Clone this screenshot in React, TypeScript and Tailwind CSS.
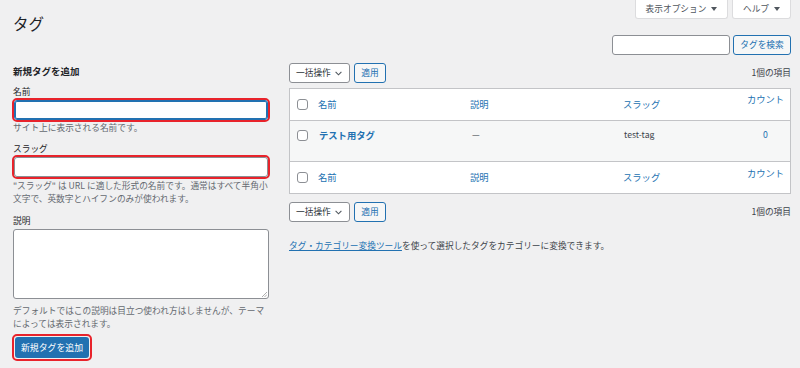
import React from "react";

function Caret() {
  return (
    <svg width="6" height="4" viewBox="0 0 6 4" className="ml-[5px] inline-block">
      <path d="M0 0 L6 0 L3 4 Z" fill="#50575e" />
    </svg>
  );
}

function Chevron() {
  return (
    <svg width="7" height="5" viewBox="0 0 7 5" className="ml-[4px]">
      <path d="M0.6 0.8 L3.5 3.8 L6.4 0.8" fill="none" stroke="#50575e" strokeWidth="1.1" />
    </svg>
  );
}

function Checkbox() {
  return <span className="block w-[11px] h-[11px] bg-white border border-[#8c8f94] rounded-[3px]" />;
}

function BulkNav() {
  return (
    <div className="flex items-center h-[20px]">
      <div className="flex items-center h-[20px] w-[61px] pl-[6px] bg-white border border-[#8c8f94] rounded-[3px] text-[8.7px] text-[#2c3338]">
        一括操作
        <Chevron />
      </div>
      <button className="ml-[4px] h-[20px] w-[32px] bg-[#f6f7f7] border border-[#2271b1] rounded-[3px] text-[8.7px] text-[#2271b1]">
        適用
      </button>
      <span className="ml-auto text-[8.7px] text-[#3c434a]">1個の項目</span>
    </div>
  );
}

function HeadRow({ footer }: { footer?: boolean }) {
  return (
    <div
      className={`grid grid-cols-[20px_152px_153px_126px_49px] h-[32px] items-center bg-white text-[9.3px] text-[#2271b1] ${
        footer ? "border-t border-[#c3c4c7]" : "border-b border-[#c3c4c7]"
      }`}
    >
      <div className="pl-[7px]">
        <Checkbox />
      </div>
      <div className="pl-[8px]">名前</div>
      <div className="pl-[8px]">説明</div>
      <div className="pl-[8px]">スラッグ</div>
      <div className={`text-center ${footer ? "-mt-[8px]" : "-mt-[10px]"}`}>カウント</div>
    </div>
  );
}

export default function App() {
  return (
    <div className="w-[800px] h-[368px] overflow-hidden bg-[#f0f0f1] text-[#3c434a] font-['Noto_Sans_CJK_JP',sans-serif]">
      <div className="flex justify-between pl-[13px] pr-[9px]">
        <h1 className="pt-[13px] text-[15.5px] leading-[20px] text-[#1d2327]">タグ</h1>
        <div className="flex gap-[4px] items-start">
          <button className="flex items-center justify-center h-[19px] w-[93px] bg-white border border-t-0 border-[#dcdcde] rounded-b-[3px] text-[8.7px] text-[#50575e]">
            表示オプション
            <Caret />
          </button>
          <button className="flex items-center justify-center h-[19px] w-[59px] bg-white border border-t-0 border-[#dcdcde] rounded-b-[3px] text-[8.7px] text-[#50575e]">
            ヘルプ
            <Caret />
          </button>
        </div>
      </div>

      <div className="flex justify-end pr-[9px] mt-[2px] gap-[3px]">
        <div className="h-[20px] w-[118px] bg-white border border-[#8c8f94] rounded-[3px]" />
        <button className="h-[20px] w-[58px] bg-[#f6f7f7] border border-[#2271b1] rounded-[3px] text-[8.7px] text-[#2271b1]">
          タグを検索
        </button>
      </div>

      <div className="flex pl-[13px] pr-[9px] mt-[8px]">
        <div className="w-[256px] shrink-0">
          <h2 className="mt-[2px] text-[9.5px] leading-[12px] font-bold text-[#1d2327]">新規タグを追加</h2>
          <label className="block mt-[9px] text-[8.7px] leading-[12px] text-[#1d2327]">名前</label>
          <div className="-ml-px w-[258px] h-[24px] border-2 border-[#e8232b] rounded-[5px]">
            <div className="h-full bg-white border border-[#2271b1] shadow-[inset_0_0_0_1px_#2271b1] rounded-[3px]" />
          </div>
          <p className="text-[8.7px] leading-[12px] text-[#646970]">サイト上に表示される名前です。</p>
          <label className="block mt-[9px] text-[8.7px] leading-[12px] text-[#1d2327]">スラッグ</label>
          <div className="-ml-px w-[258px] h-[24px] border-2 border-[#e8232b] rounded-[5px]">
            <div className="h-full bg-white border border-[#8c8f94] rounded-[3px]" />
          </div>
          <p className="text-[8.7px] leading-[13px] text-[#646970]">
            "スラッグ" は URL に適した形式の名前です。通常はすべて半角小文字で、英数字とハイフンのみが使われます。
          </p>
          <label className="block mt-[10px] text-[8.7px] leading-[12px] text-[#1d2327]">説明</label>
          <div className="relative mt-[2px] h-[70px] bg-white border border-[#8c8f94] rounded-[3px]">
            <svg width="6" height="6" viewBox="0 0 6 6" className="absolute right-[1px] bottom-[1px]">
              <path d="M1 6 L6 1 M3.5 6 L6 3.5" stroke="#9a9a9a" strokeWidth="0.8" />
            </svg>
          </div>
          <p className="mt-[5px] text-[8.7px] leading-[13px] text-[#646970]">
            デフォルトではこの説明は目立つ使われ方はしませんが、テーマによっては表示されます。
          </p>
          <div className="-ml-px mt-[4px] w-[80px] h-[27px] border-2 border-[#e8232b] rounded-[5px] p-px">
            <button className="block w-full h-full bg-[#2271b1] rounded-[3px] text-[8.9px] leading-[12px] text-white">
              新規タグを追加
            </button>
          </div>
        </div>

        <div className="ml-[20px] flex-1">
          <BulkNav />
          <div className="mt-[5px] border border-[#c3c4c7]">
            <HeadRow />
            <div className="grid grid-cols-[20px_152px_153px_126px_49px] h-[40px] bg-[#f6f7f7] pt-[8px] text-[8.7px] leading-[12px]">
              <div className="pl-[7px] pt-[1px]">
                <Checkbox />
              </div>
              <div className="pl-[9px] text-[9.3px] font-bold text-[#2271b1]">テスト用タグ</div>
              <div className="pl-[10px]">—</div>
              <div className="pl-[9px]">test-tag</div>
              <div className="text-center text-[#2271b1]">0</div>
            </div>
            <HeadRow footer />
          </div>
          <div className="mt-[8px]">
            <BulkNav />
          </div>
          <p className="mt-[18px] text-[8.7px] leading-[12px] text-[#3c434a]">
            <span className="text-[#2271b1] underline">タグ・カテゴリー変換ツール</span>
            を使って選択したタグをカテゴリーに変換できます。
          </p>
        </div>
      </div>
    </div>
  );
}
